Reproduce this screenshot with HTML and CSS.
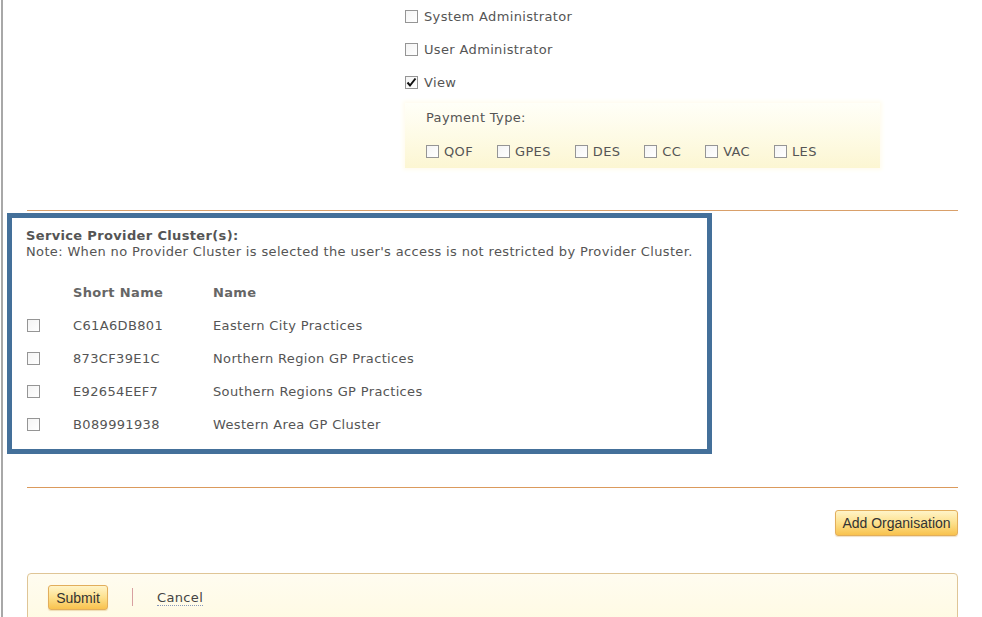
FILE: index.html
```html
<!DOCTYPE html>
<html>
<head>
<meta charset="utf-8">
<link rel="stylesheet" href="styles.css">
</head>
<body>
<div class="page">
  <div class="content">
    <div class="roles">
      <label class="role"><span class="cb"></span><span>System Administrator</span></label>
      <label class="role"><span class="cb"></span><span>User Administrator</span></label>
      <label class="role"><span class="cb checked"><svg viewBox="0 0 13 13" width="13" height="13"><path d="M2.5 6.5 L5 9.5 L10.5 2.5" fill="none" stroke="#111" stroke-width="2"/></svg></span><span>View</span></label>
      <div class="payment">
        <div class="payment-title">Payment Type:</div>
        <div class="payment-options">
          <label class="opt"><span class="cb"></span><span>QOF</span></label>
          <label class="opt"><span class="cb"></span><span>GPES</span></label>
          <label class="opt"><span class="cb"></span><span>DES</span></label>
          <label class="opt"><span class="cb"></span><span>CC</span></label>
          <label class="opt"><span class="cb"></span><span>VAC</span></label>
          <label class="opt"><span class="cb"></span><span>LES</span></label>
        </div>
      </div>
    </div>

    <div class="rule rule-top"></div>

    <div class="cluster">
      <div class="cluster-title">Service Provider Cluster(s):</div>
      <div class="cluster-note">Note: When no Provider Cluster is selected the user's access is not restricted by Provider Cluster.</div>
      <table class="cluster-table">
        <thead>
          <tr><th class="c-cb"></th><th class="c-short">Short Name</th><th>Name</th></tr>
        </thead>
        <tbody>
          <tr><td class="c-cb"><span class="cb"></span></td><td>C61A6DB801</td><td>Eastern City Practices</td></tr>
          <tr><td class="c-cb"><span class="cb"></span></td><td>873CF39E1C</td><td>Northern Region GP Practices</td></tr>
          <tr><td class="c-cb"><span class="cb"></span></td><td>E92654EEF7</td><td>Southern Regions GP Practices</td></tr>
          <tr><td class="c-cb"><span class="cb"></span></td><td>B089991938</td><td>Western Area GP Cluster</td></tr>
        </tbody>
      </table>
    </div>

    <div class="rule rule-bottom"></div>

    <div class="add-row">
      <button class="btn btn-add">Add Organisation</button>
    </div>

    <div class="actions">
      <button class="btn btn-submit">Submit</button>
      <span class="sep"></span>
      <a class="cancel" href="#">Cancel</a>
    </div>
  </div>
</div>
</body>
</html>
```

FILE: styles.css
```css
html, body {
  margin: 0;
  padding: 0;
  background: #fff;
  height: 100%;
  overflow: hidden;
}
body {
  font-family: "DejaVu Sans", Verdana, sans-serif;
  color: #555;
  letter-spacing: 0.35px;
}
.page {
  margin-left: 1px;
  border-left: 2px solid #a8a8a8;
  min-height: 617px;
}
.content {
  margin-left: 24px;
  width: 931px;
}
.cb {
  display: inline-block;
  box-sizing: border-box;
  width: 13px;
  height: 13px;
  border: 1px solid #959595;
  background: linear-gradient(to bottom right, #f4f4f4, #fff);
  flex: none;
  position: relative;
}
.cb svg {
  position: absolute;
  left: -1px;
  top: -1px;
}
.roles {
  margin-left: 378px;
  font-size: 13px;
}
.role {
  display: flex;
  align-items: center;
  height: 33px;
  gap: 6px;
}
.payment {
  margin-top: 4px;
  width: 475px;
  box-sizing: border-box;
  padding: 7px 0 7px 21px;
  background: linear-gradient(to bottom, #fffff8 0%, #fefbe6 50%, #fcf6d2 100%);
  box-shadow: 0 0 4px 2px #fffcee;
}
.payment-title {
  line-height: 16px;
}
.payment-options {
  margin-top: 15px;
  display: flex;
  align-items: center;
  height: 20px;
}
.opt {
  display: flex;
  align-items: center;
  gap: 5px;
  margin-right: 24px;
}
.rule {
  height: 1px;
  background: #d9a06a;
}
.rule-top {
  margin-top: 42px;
}
.cluster {
  margin-top: 2px;
  margin-left: -20px;
  width: 705px;
  box-sizing: border-box;
  border: 5px solid #44709a;
  padding: 10px 0 8px 14px;
  font-size: 13px;
  color: #555;
}
.cluster-title {
  font-weight: bold;
  line-height: 16px;
  color: #555;
}
.cluster-note {
  line-height: 16px;
}
.cluster-table {
  margin-top: 16px;
  border-collapse: collapse;
  font-size: 13px;
}
.cluster-table th,
.cluster-table td {
  height: 33px;
  padding: 0;
  text-align: left;
  vertical-align: middle;
}
.cluster-table th {
  font-weight: bold;
  color: #666;
}
.c-cb {
  width: 47px;
}
.c-cb .cb {
  display: block;
  margin-left: 1px;
}
.c-short {
  width: 140px;
}
.rule-bottom {
  margin-top: 33px;
  background: #db9a5c;
}
.add-row {
  margin-top: 22px;
  display: flex;
  justify-content: flex-end;
}
.btn {
  font-family: "Liberation Sans", Arial, sans-serif;
  font-size: 14px;
  letter-spacing: 0;
  color: #333;
  border: 1px solid #e2ae5c;
  border-radius: 3px;
  background: linear-gradient(to bottom, #fff4c8 0%, #fde08c 50%, #f8c24e 100%);
  padding: 0;
  box-shadow: 0 1px 1px rgba(200, 150, 60, 0.3);
}
.btn-add {
  width: 123px;
  height: 26px;
}
.actions {
  margin-top: 37px;
  height: 60px;
  box-sizing: border-box;
  border: 1px solid #dfc596;
  border-radius: 4px;
  background: linear-gradient(to bottom, #fffcf0 0%, #fffae0 100%);
  padding: 11px 0 0 20px;
  display: flex;
  align-items: flex-start;
}
.btn-submit {
  width: 60px;
  height: 25px;
}
.sep {
  display: inline-block;
  width: 1px;
  height: 18px;
  background: #d8a0a0;
  margin: 3px 0 0 24px;
}
.cancel {
  margin-left: 24px;
  margin-top: 5px;
  font-size: 13px;
  color: #444;
  text-decoration: none;
  border-bottom: 1px dotted #8899bb;
  line-height: 15px;
}
```
